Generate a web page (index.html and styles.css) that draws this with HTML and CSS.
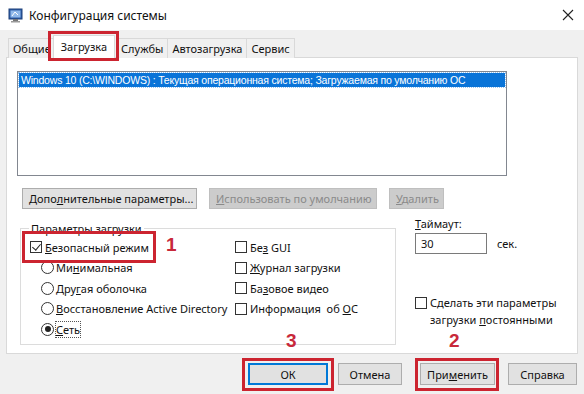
FILE: index.html
```html
<!DOCTYPE html>
<html lang="ru">
<head>
    <meta charset="UTF-8">
    <title>Конфигурация системы</title>
    <link rel="stylesheet" href="styles.css">
</head>
<body>
    <div class="window">
        <div class="titlebar">
            <svg class="app-icon" width="16" height="16" viewBox="0 0 16 16">
                <rect x="1" y="2" width="13" height="10" fill="#2f5fa8" stroke="#1d3f78"/>
                <rect x="2.5" y="3.5" width="10" height="7" fill="#8fb8ea"/>
                <path d="M4 9 L7 5 L10 8" stroke="#fff" stroke-width="1" fill="none"/>
                <rect x="5" y="12" width="5" height="2" fill="#777"/>
                <rect x="3" y="14" width="9" height="1.5" fill="#999"/>
            </svg>
            <span class="title">Конфигурация системы</span>
            <svg class="close" width="12" height="12" viewBox="0 0 12 12">
                <path d="M1 1 L11 11 M11 1 L1 11" stroke="#222" stroke-width="1.1"/>
            </svg>
        </div>

        <div class="client">
            <div class="tabs">
                <div class="tab">Общие</div>
                <div class="tab active">Загрузка</div>
                <div class="tab">Службы</div>
                <div class="tab">Автозагрузка</div>
                <div class="tab">Сервис</div>
            </div>

            <div class="panel">
                <div class="listbox">
                    <div class="list-item selected">Windows 10 (C:\WINDOWS) : Текущая операционная система; Загружаемая по умолчанию ОС</div>
                </div>

                <div class="btn-row">
                    <button class="btn">Допо<u>л</u>нительные параметры...</button>
                    <button class="btn disabled"><u>И</u>спользовать по умолчанию</button>
                    <button class="btn disabled"><u>У</u>далить</button>
                </div>

                <div class="lower">
                    <fieldset class="group">
                        <legend>Параметры загрузки</legend>
                        <div class="cols">
                            <div class="col left">
                                <label class="opt"><span class="check checked"></span><span><u>Б</u>езопасный режим</span></label>
                                <label class="opt sub"><span class="radio"></span><span>Ми<u>н</u>имальная</span></label>
                                <label class="opt sub"><span class="radio"></span><span>Дру<u>г</u>ая оболочка</span></label>
                                <label class="opt sub"><span class="radio"></span><span><u>В</u>осстановление Active Directory</span></label>
                                <label class="opt sub"><span class="radio checked"></span><span class="focus"><u>С</u>еть</span></label>
                            </div>
                            <div class="col right">
                                <label class="opt"><span class="check"></span><span>Бе<u>з</u> GUI</span></label>
                                <label class="opt"><span class="check"></span><span><u>Ж</u>урнал загрузки</span></label>
                                <label class="opt"><span class="check"></span><span>Ба<u>з</u>овое видео</span></label>
                                <label class="opt"><span class="check"></span><span>Информация&nbsp; об <u>О</u>С</span></label>
                            </div>
                        </div>
                    </fieldset>

                    <div class="side">
                        <div class="timeout-label"><u>Т</u>аймаут:</div>
                        <div class="timeout-row">
                            <div class="input">30</div>
                            <span>сек.</span>
                        </div>
                        <label class="opt persist"><span class="check"></span><span>Сделать эти параметры<br>загрузки <u>п</u>остоянными</span></label>
                    </div>
                </div>
            </div>

            <div class="footer">
                <button class="btn wide default">ОК</button>
                <button class="btn wide">Отмена</button>
                <button class="btn wide">При<u>м</u>енить</button>
                <button class="btn wide">Справка</button>
            </div>
        </div>

        <!-- annotations drawn over the dialog -->
        <div class="mark mark-tab"></div>
        <div class="mark mark-safe"></div>
        <div class="mark mark-ok"></div>
        <div class="mark mark-apply"></div>
        <span class="num num1">1</span>
        <span class="num num2">2</span>
        <span class="num num3">3</span>
    </div>
</body>
</html>
```

FILE: styles.css
```css
body {
    margin: 0;
    font-family: "Noto Sans", "Open Sans", sans-serif;
    font-size: 11px;
    color: #111;
}
.window {
    position: relative;
    width: 584px;
    height: 394px;
    background: #f0f0f0;
    overflow: hidden;
}
.titlebar {
    height: 30px;
    background: #fff;
    display: flex;
    align-items: center;
    padding: 0 8px;
}
.app-icon { margin-right: 5px; }
.title {
    font-size: 12px;
    flex: 1;
}
.close { margin-right: 2px; }

.client {
    padding: 5px 6px 0 6px;
}
.tabs {
    display: flex;
    align-items: flex-end;
    height: 23px;
    padding-left: 2px;
}
.tab {
    height: 20px;
    line-height: 19px;
    padding: 0 4px;
    border: 1px solid #d9d9d9;
    border-bottom: none;
    margin-right: -1px;
    background: #f0f0f0;
    box-sizing: border-box;
    white-space: nowrap;
}
.tab.active {
    height: 23px;
    line-height: 21px;
    background: #fff;
    padding: 0 7px;
    position: relative;
    z-index: 1;
    margin: 0 1px 0 -2px;
}
.panel {
    height: 297px;
    background: #fff;
    border: 1px solid #d9d9d9;
    margin-top: -1px;
    box-sizing: border-box;
    padding: 13px 0 0 10px;
}
.listbox {
    width: 490px;
    height: 105px;
    border: 1px solid #828790;
    box-sizing: border-box;
    padding: 1px;
    font-family: "Liberation Sans", sans-serif;
    font-size: 10.5px;
    letter-spacing: -0.2px;
}
.list-item {
    height: 14px;
    line-height: 14px;
    padding-left: 2px;
    white-space: nowrap;
}
.list-item.selected {
    background: #0a74d8;
    color: #fff;
    outline: 1px dotted #9cc6f0;
}
.btn-row {
    display: flex;
    gap: 12px;
    margin: 12px 0 0 5px;
}
.btn {
    font-family: inherit;
    font-size: 11px;
    height: 21px;
    padding: 0 6px;
    background: #e1e1e1;
    border: 1px solid #adadad;
    color: #111;
    white-space: nowrap;
}
.btn.disabled {
    background: #cccccc;
    border-color: #bfbfbf;
    color: #8a8a8a;
}
.btn-row .btn:nth-child(1) { width: 175px; }
.btn-row .btn:nth-child(2) { width: 168px; }
.btn-row .btn:nth-child(3) { width: 55px; }

.lower {
    display: flex;
    margin-top: 12px;
}
.group {
    width: 376px;
    height: 124px;
    margin: 0 0 0 3px;
    padding: 0 0 0 9px;
    border: 1px solid #dcdcdc;
    box-sizing: border-box;
}
.group legend {
    padding: 0 2px;
    margin-left: -1px;
}
.cols {
    display: flex;
    margin-top: 1px;
}
.col.left { width: 205px; }
.opt {
    display: flex;
    align-items: center;
    gap: 3px;
    height: 20.5px;
    white-space: nowrap;
}
.opt.sub { padding-left: 11px; gap: 2px; }
.check {
    width: 12px;
    height: 12px;
    border: 1px solid #333;
    background: #fff;
    box-sizing: border-box;
    position: relative;
    flex: none;
}
.check.checked::after {
    content: "";
    position: absolute;
    left: 3px;
    top: 0;
    width: 4px;
    height: 7px;
    border: solid #222;
    border-width: 0 1.5px 1.5px 0;
    transform: rotate(40deg);
}
.radio {
    width: 13px;
    height: 13px;
    border: 1px solid #333;
    border-radius: 50%;
    box-sizing: border-box;
    position: relative;
    flex: none;
}
.radio.checked::after {
    content: "";
    position: absolute;
    left: 2.5px;
    top: 2.5px;
    width: 6px;
    height: 6px;
    border-radius: 50%;
    background: #222;
}
.focus { outline: 1px dotted #555; outline-offset: 0; }

.side {
    margin-left: 19px;
    margin-top: -5px;
}
.timeout-label { height: 17px; }
.timeout-row {
    display: flex;
    align-items: center;
    gap: 10px;
}
.input {
    width: 72px;
    height: 21px;
    border: 1px solid #7a7a7a;
    box-sizing: border-box;
    line-height: 19px;
    padding-left: 5px;
}
.opt.persist {
    align-items: flex-start;
    height: auto;
    margin-top: 40px;
    line-height: 17px;
    white-space: normal;
}
.opt.persist .check { margin-top: 3px; }

.footer {
    display: flex;
    justify-content: flex-end;
    gap: 10px;
    padding: 9px 1px 0 0;
}
.btn.wide { height: 22px; min-width: 64px; }
.footer .btn:nth-child(1) { width: 80px; }
.footer .btn:nth-child(3) { width: 75px; margin-left: 8px; }
.footer .btn:nth-child(4) { width: 69px; margin-left: 3px; }
.btn.default { border: 2px solid #0078d7; }

.mark {
    position: absolute;
    border: 3px solid #cc2430;
    box-sizing: border-box;
}
.mark-tab { left: 48px; top: 31px; width: 71px; height: 30px; }
.mark-safe { left: 22px; top: 231px; width: 134px; height: 32px; }
.mark-ok { left: 242px; top: 358px; width: 92px; height: 33px; }
.mark-apply { left: 415px; top: 358px; width: 84px; height: 33px; }
.num {
    position: absolute;
    color: #c8283a;
    font-family: "Liberation Sans", sans-serif;
    font-weight: bold;
    font-size: 19px;
}
.num1 { left: 166px; top: 234px; }
.num2 { left: 449px; top: 330px; }
.num3 { left: 286px; top: 330px; }
```
